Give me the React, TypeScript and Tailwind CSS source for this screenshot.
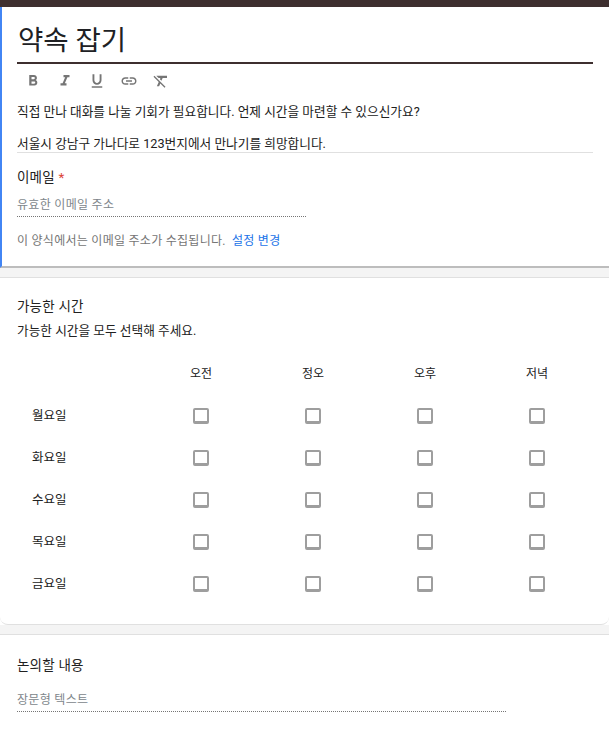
import React from 'react';
import { MdFormatBold, MdFormatItalic, MdFormatUnderlined, MdLink, MdFormatClear } from 'react-icons/md';

const days = ['월요일', '화요일', '수요일', '목요일', '금요일'];
const times = ['오전', '정오', '오후', '저녁'];
const tools = [MdFormatBold, MdFormatItalic, MdFormatUnderlined, MdLink, MdFormatClear];

const Check = () => (
  <div className="flex items-center justify-center">
    <div className="h-4 w-4 rounded-[2px] border-2 border-b-[3px] border-[#9e9e9e] bg-white" />
  </div>
);

export default function App() {
  return (
    <div className="h-[742px] overflow-hidden bg-white text-[12.7px] text-[#212121] font-['Roboto','Noto_Sans_CJK_KR',sans-serif]">
      <div className="h-[7px] bg-[#3e2f2f]" />

      {/* header card */}
      <div className="h-[261px] border-b-2 border-l-2 border-b-[#bdbdbd] border-l-[#4285f4] pl-[15px] pr-4">
        <div className="flex h-[57px] items-end border-b-[2px] border-[#3e2f2f] pb-px pl-px text-[27.5px] leading-[40px] text-[#202124]">
          약속 잡기
        </div>
        <div className="flex h-[33px] items-center gap-[14px] pl-[7px] text-[#757575]">
          {tools.map((Icon, i) => (
            <Icon key={i} size={18} />
          ))}
        </div>
        <div className="border-b border-[#e0e0e0]">
          <p className="pt-[5px] leading-[20px]">직접 만나 대화를 나눌 기회가 필요합니다. 언제 시간을 마련할 수 있으신가요?</p>
          <p className="pt-[14px] leading-[16px]">서울시 강남구 가나다로 123번지에서 만나기를 희망합니다.</p>
        </div>
        <div className="mt-[15px] text-[13.5px] leading-[18px] tracking-[0.2px]">
          이메일 <span className="text-[#db4437]">*</span>
        </div>
        <div className="mt-[10px] w-[289px] border-b border-dotted border-[#757575] pb-[2px] text-[12px] leading-[18px] tracking-[0.3px] text-[#80868b]">
          유효한 이메일 주소
        </div>
        <div className="mt-[15px] text-[12px] leading-[18px] tracking-[0.27px] text-[#757575]">
          이 양식에서는 이메일 주소가 수집됩니다. <span className="ml-[3px] text-[#1a73e8]">설정 변경</span>
        </div>
      </div>

      <div className="h-[10px] border-b border-[#e0e0e0] bg-[#f4f4f4]" />

      {/* availability card */}
      <div className="h-[347px] rounded-b-lg border-b border-[#e0e0e0] px-[17px] pt-[18px]">
        <div className="text-[13.5px] leading-[20px] tracking-[0.2px]">가능한 시간</div>
        <div className="mt-[6px] leading-[18px]">가능한 시간을 모두 선택해 주세요.</div>
        <div className="mt-[13px] grid grid-cols-[128px_repeat(4,112px)] text-[12px]">
          <div className="h-[42px]" />
          {times.map((t) => (
            <div key={t} className="flex h-[42px] items-center justify-center">
              {t}
            </div>
          ))}
          {days.map((d) => (
            <React.Fragment key={d}>
              <div className="flex h-[42px] items-center pl-[15px] text-[12.5px]">{d}</div>
              {times.map((t) => (
                <Check key={t} />
              ))}
            </React.Fragment>
          ))}
        </div>
      </div>

      <div className="h-[10px] border-b border-[#e0e0e0] bg-[#f4f4f4]" />

      {/* discussion card */}
      <div className="px-[17px] pt-[20px]">
        <div className="text-[13.5px] leading-[20px] tracking-[0.2px]">논의할 내용</div>
        <div className="mt-[16px] w-[489px] border-b border-dotted border-[#757575] pb-[2px] text-[12px] leading-[18px] tracking-[0.3px] text-[#80868b]">
          장문형 텍스트
        </div>
      </div>
    </div>
  );
}
